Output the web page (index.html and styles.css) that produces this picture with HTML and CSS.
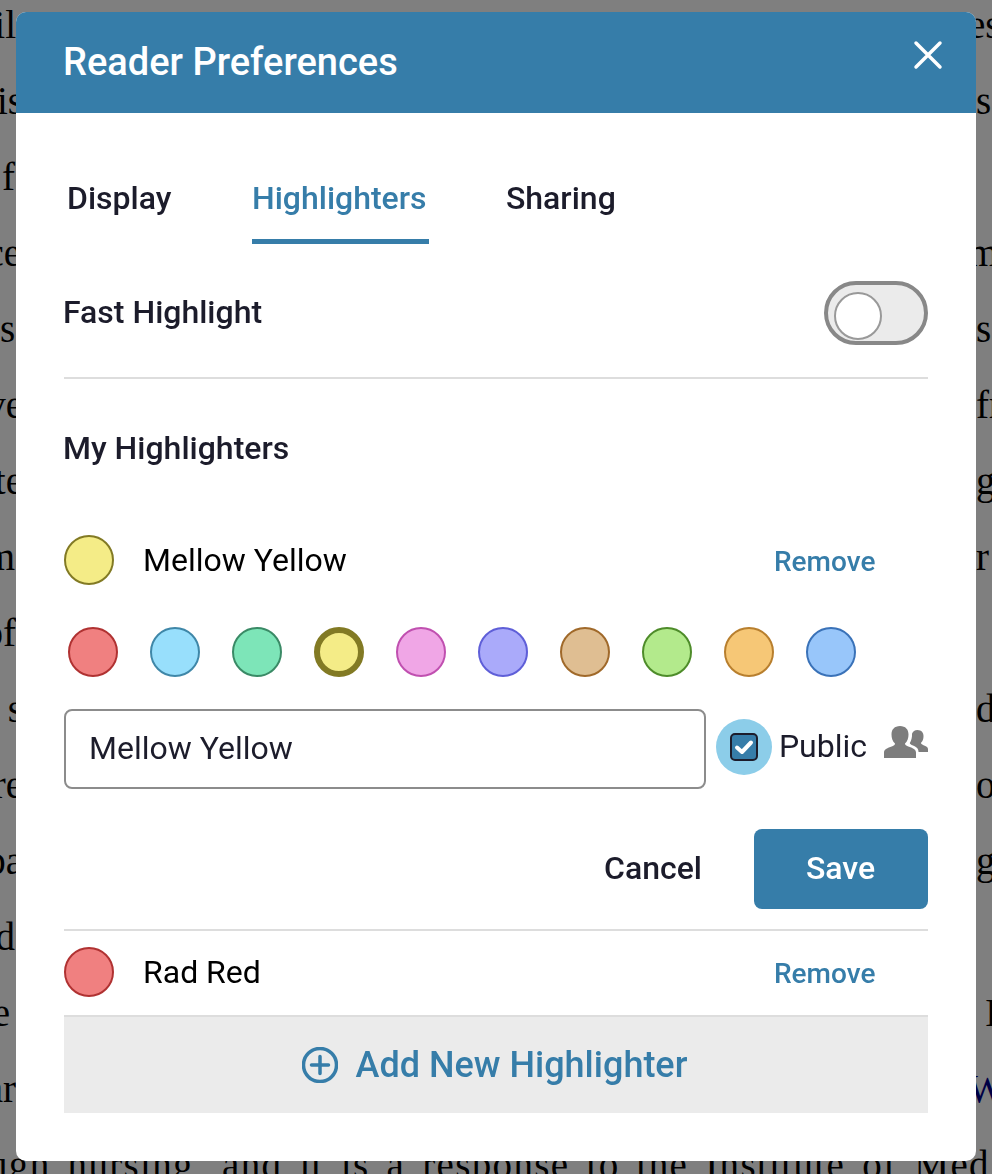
FILE: index.html
```html
<!DOCTYPE html>
<html lang="en">
<head>
<meta charset="utf-8">
<title>Reader Preferences</title>
<link rel="stylesheet" href="styles.css">
</head>
<body>
<div class="page">
  <div class="line"><span class="l">il</span><span class="r back">es</span></div>
  <div class="line"><span class="l in7">is</span><span class="r">s</span></div>
  <div class="line"><span class="l in1">f</span><span class="r"></span></div>
  <div class="line"><span class="l in5">ce</span><span class="r back">m</span></div>
  <div class="line"><span class="l in9">s,</span><span class="r">s</span></div>
  <div class="line"><span class="l in7">ve</span><span class="r">fr</span></div>
  <div class="line"><span class="l in7">te</span><span class="r">g</span></div>
  <div class="line"><span class="l in1">m</span><span class="r">r</span></div>
  <div class="line"><span class="l">of</span><span class="r"></span></div>
  <div class="line"><span class="l in7">s</span><span class="r">d</span></div>
  <div class="line"><span class="l in7">re</span><span class="r">o</span></div>
  <div class="line"><span class="l in7">pa</span><span class="r">ge</span></div>
  <div class="line"><span class="l in1">d</span><span class="r"></span></div>
  <div class="line"><span class="l out6">e</span><span class="r on10">I</span></div>
  <div class="line"><span class="l">ar</span><span class="r back"><a class="link">W</a></span></div>
  <div class="line last">ugh nursing, and it is a response to the Institute of Med</div>
</div>
<div class="scrim"></div>
<div class="modal">
  <header class="head">
    <h1 class="title">Reader Preferences</h1>
    <svg class="close" viewBox="0 0 30 30" aria-label="Close"><path d="M3 3 L27 27 M27 3 L3 27"/></svg>
  </header>
  <div class="body">
    <nav class="tabs">
      <span class="tab">Display</span>
      <span class="tab active">Highlighters</span>
      <span class="tab">Sharing</span>
    </nav>
    <div class="fast">
      <span class="label">Fast Highlight</span>
      <span class="toggle"><span class="knob"></span></span>
    </div>
    <h2 class="label heading">My Highlighters</h2>
    <div class="item first">
      <span class="dot yellow"></span>
      <span class="name">Mellow Yellow</span>
      <span class="remove">Remove</span>
    </div>
    <div class="swatches">
      <span class="dot red"></span>
      <span class="dot blue"></span>
      <span class="dot green"></span>
      <span class="dot yellow picked"></span>
      <span class="dot pink"></span>
      <span class="dot violet"></span>
      <span class="dot tan"></span>
      <span class="dot lime"></span>
      <span class="dot orange"></span>
      <span class="dot sky"></span>
    </div>
    <div class="edit">
      <input class="field" type="text" value="Mellow Yellow">
      <span class="halo">
        <span class="check">
          <svg viewBox="0 0 24 24"><path d="M5 12.500 L10 17 L19 7.500"/></svg>
        </span>
      </span>
      <span class="public">Public</span>
      <svg class="people" viewBox="0 0 44 32">
        <path d="M0 32 V26.500 C0 23.500 3 22.300 7 20.800 C10 19.700 11 18.800 11 17.500 C8.500 15.500 7.500 12 7.500 8.500 C7.500 3.500 10.500 0 16 0 C21.500 0 24.500 3.500 24.500 8.500 C24.500 12 23.500 15.500 21 17.500 C21 18.800 22 19.700 25 20.800 C29 22.300 32 23.500 32 26.500 V32 Z"/>
        <path d="M34.500 26 H44 V23 C44 21 42 20 39.500 19.200 C37.500 18.500 37 17.800 37 16.800 C38.700 15.300 39.500 13 39.500 10.300 C39.500 6.800 37.500 4 33.500 4 C30.700 4 28.800 5.500 28 7.700 C28.200 11 27.500 14.300 25.800 17 C25.900 18 27 18.800 29 19.500 C32 20.700 34.500 22.500 34.500 25.500 Z"/>
      </svg>
    </div>
    <div class="actions">
      <span class="cancel">Cancel</span>
      <span class="save">Save</span>
    </div>
    <div class="item second">
      <span class="dot red"></span>
      <span class="name">Rad Red</span>
      <span class="remove">Remove</span>
    </div>
    <div class="add">
      <svg class="plus" viewBox="0 0 36 36"><circle cx="18" cy="18" r="16.500"/><path d="M18 9.500 V26.500 M9.500 18 H26.500"/></svg>
      <span>Add New Highlighter</span>
    </div>
  </div>
</div>
</body>
</html>
```
FILE: styles.css
```css
* { box-sizing: border-box; }
html, body { margin: 0; height: 100%; overflow: hidden; }
body { background: #fff; font-family: Roboto, "Liberation Sans", sans-serif; color: #1c1c2b; }

.page {
  margin-top: -13px;
  font-family: "Liberation Serif", serif;
  font-size: 39px;
  line-height: 76px;
  color: #000;
}
.line { display: flex; justify-content: space-between; height: 76px; white-space: nowrap; }
.l { width: 16px; display: flex; justify-content: flex-end; }
.r { width: 16px; display: flex; justify-content: flex-start; }
.in1 { margin-left: -1px; }
.in5 { margin-left: 5px; }
.in7 { margin-left: 7px; }
.in9 { margin-left: 9px; }
.out6 { margin-left: -6px; }
.back { width: 24px; }
.on10 { padding-left: 9px; }
.link { color: #00008b; }
.last { display: block; margin-left: -12px; letter-spacing: 1.330px; word-spacing: 6px; }

.scrim { position: fixed; inset: 0; background: rgba(0, 0, 0, .5); }

.modal {
  position: fixed;
  left: 16px;
  top: 12px;
  width: 960px;
  height: 1149px;
  background: #fff;
  border-radius: 10px;
  overflow: hidden;
  display: flex;
  flex-direction: column;
}
.head {
  height: 101px;
  flex: none;
  background: #367da9;
  padding: 0 48px;
  display: flex;
  align-items: center;
  justify-content: space-between;
}
.title { margin: -2px 0 0 -1px; font-size: 38px; font-weight: 500; color: #fff; }
.close { width: 30px; height: 30px; margin-right: -15px; margin-top: -16px; }
.close path { fill: none; stroke: #fff; stroke-width: 3.500px; stroke-linecap: round; }

.body { padding: 0 48px; display: flex; flex-direction: column; }

.tabs { height: 131px; display: flex; padding-left: 3px; gap: 80px; }
.tab {
  height: 131px;
  padding-top: 65px;
  font-size: 32px;
  line-height: 40px;
  font-weight: 500;
  color: #1c1c2b;
}
.tab.active { color: #367da9; border-bottom: 5px solid #367da9; padding-right: 2px; margin-left: .6px; margin-right: -2.600px; }

.fast {
  height: 135px;
  border-bottom: 2px solid #ddd;
  display: flex;
  align-items: flex-start;
  justify-content: space-between;
}
.label { font-size: 32px; font-weight: 500; line-height: 40px; color: #1c1c2b; margin-left: -1px; }
.fast .label { margin-top: 48px; }
.toggle {
  margin-top: 37px;
  width: 104px;
  height: 64px;
  border: 4px solid #888;
  border-radius: 32px;
  background: #ebebeb;
  padding: 7px 6px;
}
.knob {
  display: block;
  width: 48px;
  height: 48px;
  border: 2px solid #999;
  border-radius: 50%;
  background: #fff;
}
.heading { margin-top: 49px; margin-bottom: 0; height: 40px; }

.item { display: flex; align-items: center; }
.item.first { margin-top: 67px; }
.item.second { margin-top: 20px; height: 86px; border-top: 2px solid #ddd; padding-bottom: 2px; }
.name { margin-left: 29px; font-size: 32px; line-height: 40px; color: #000; flex: 1; }
.remove { width: 154px; font-size: 28px; font-weight: 500; color: #367da9; margin-top: 3px; }

.dot { flex: none; width: 50px; height: 50px; border-radius: 50%; border: 2px solid; }
.yellow { background: #f4ec87; border-color: #827a24; }
.yellow.picked { border-width: 6px; }
.red { background: #f08080; border-color: #b03232; }
.blue { background: #98dffc; border-color: #3f87a8; }
.green { background: #7de5b8; border-color: #3a8a66; }
.pink { background: #f0a6e6; border-color: #c050b0; }
.violet { background: #aaaafa; border-color: #5f5fd8; }
.tan { background: #dfbe92; border-color: #a0692a; }
.lime { background: #b3ea8c; border-color: #4e8c2a; }
.orange { background: #f6c776; border-color: #b87f2e; }
.sky { background: #98c6fa; border-color: #3a72b8; }

.swatches { display: flex; gap: 32px; padding-left: 4px; margin-top: 42px; }

.edit { display: flex; align-items: center; margin-top: 32px; height: 80px; }
.field {
  width: 642px;
  height: 80px;
  border: 2px solid #8c8c8c;
  border-radius: 8px;
  padding: 0 23px 3px;
  font: 400 32px Roboto, sans-serif;
  color: #1c1c2b;
  background: #fff;
}
.halo {
  margin-left: 10px;
  margin-top: -4px;
  width: 56px;
  height: 56px;
  flex: none;
  border-radius: 50%;
  background: #8ccde9;
  display: flex;
  align-items: center;
  justify-content: center;
}
.check {
  width: 28px;
  height: 28px;
  border: 2px solid #1c1c2b;
  border-radius: 5px;
  background: #367da9;
  display: flex;
}
.check path { fill: none; stroke: #fff; stroke-width: 4px; stroke-linecap: round; stroke-linejoin: round; }
.public { margin-left: 7px; font-size: 32px; line-height: 40px; margin-top: -6px; }
.people { width: 44px; height: 32px; margin-left: 17px; margin-top: -14px; fill: #7d7d7d; }

.actions { display: flex; align-items: center; justify-content: flex-end; margin-top: 40px; height: 80px; }
.cancel { font-size: 32px; font-weight: 500; color: #1c1c2b; margin-right: 52px; margin-top: -2px; }
.save {
  width: 174px;
  height: 80px;
  background: #367da9;
  border-radius: 8px;
  color: #fff;
  font-size: 32px;
  font-weight: 500;
  display: flex;
  align-items: center;
  justify-content: center;
  padding: 0 1px 2px 0;
}

.add {
  height: 98px;
  background: #ebebeb;
  border-top: 2px solid #ddd;
  display: flex;
  align-items: center;
  justify-content: center;
  gap: 18px;
  padding-right: 3px;
  font-size: 36px;
  font-weight: 500;
  color: #367da9;
}
.plus { width: 36px; height: 36px; }
.plus circle, .plus path { fill: none; stroke: #367da9; stroke-width: 3.500px; stroke-linecap: round; }
```
